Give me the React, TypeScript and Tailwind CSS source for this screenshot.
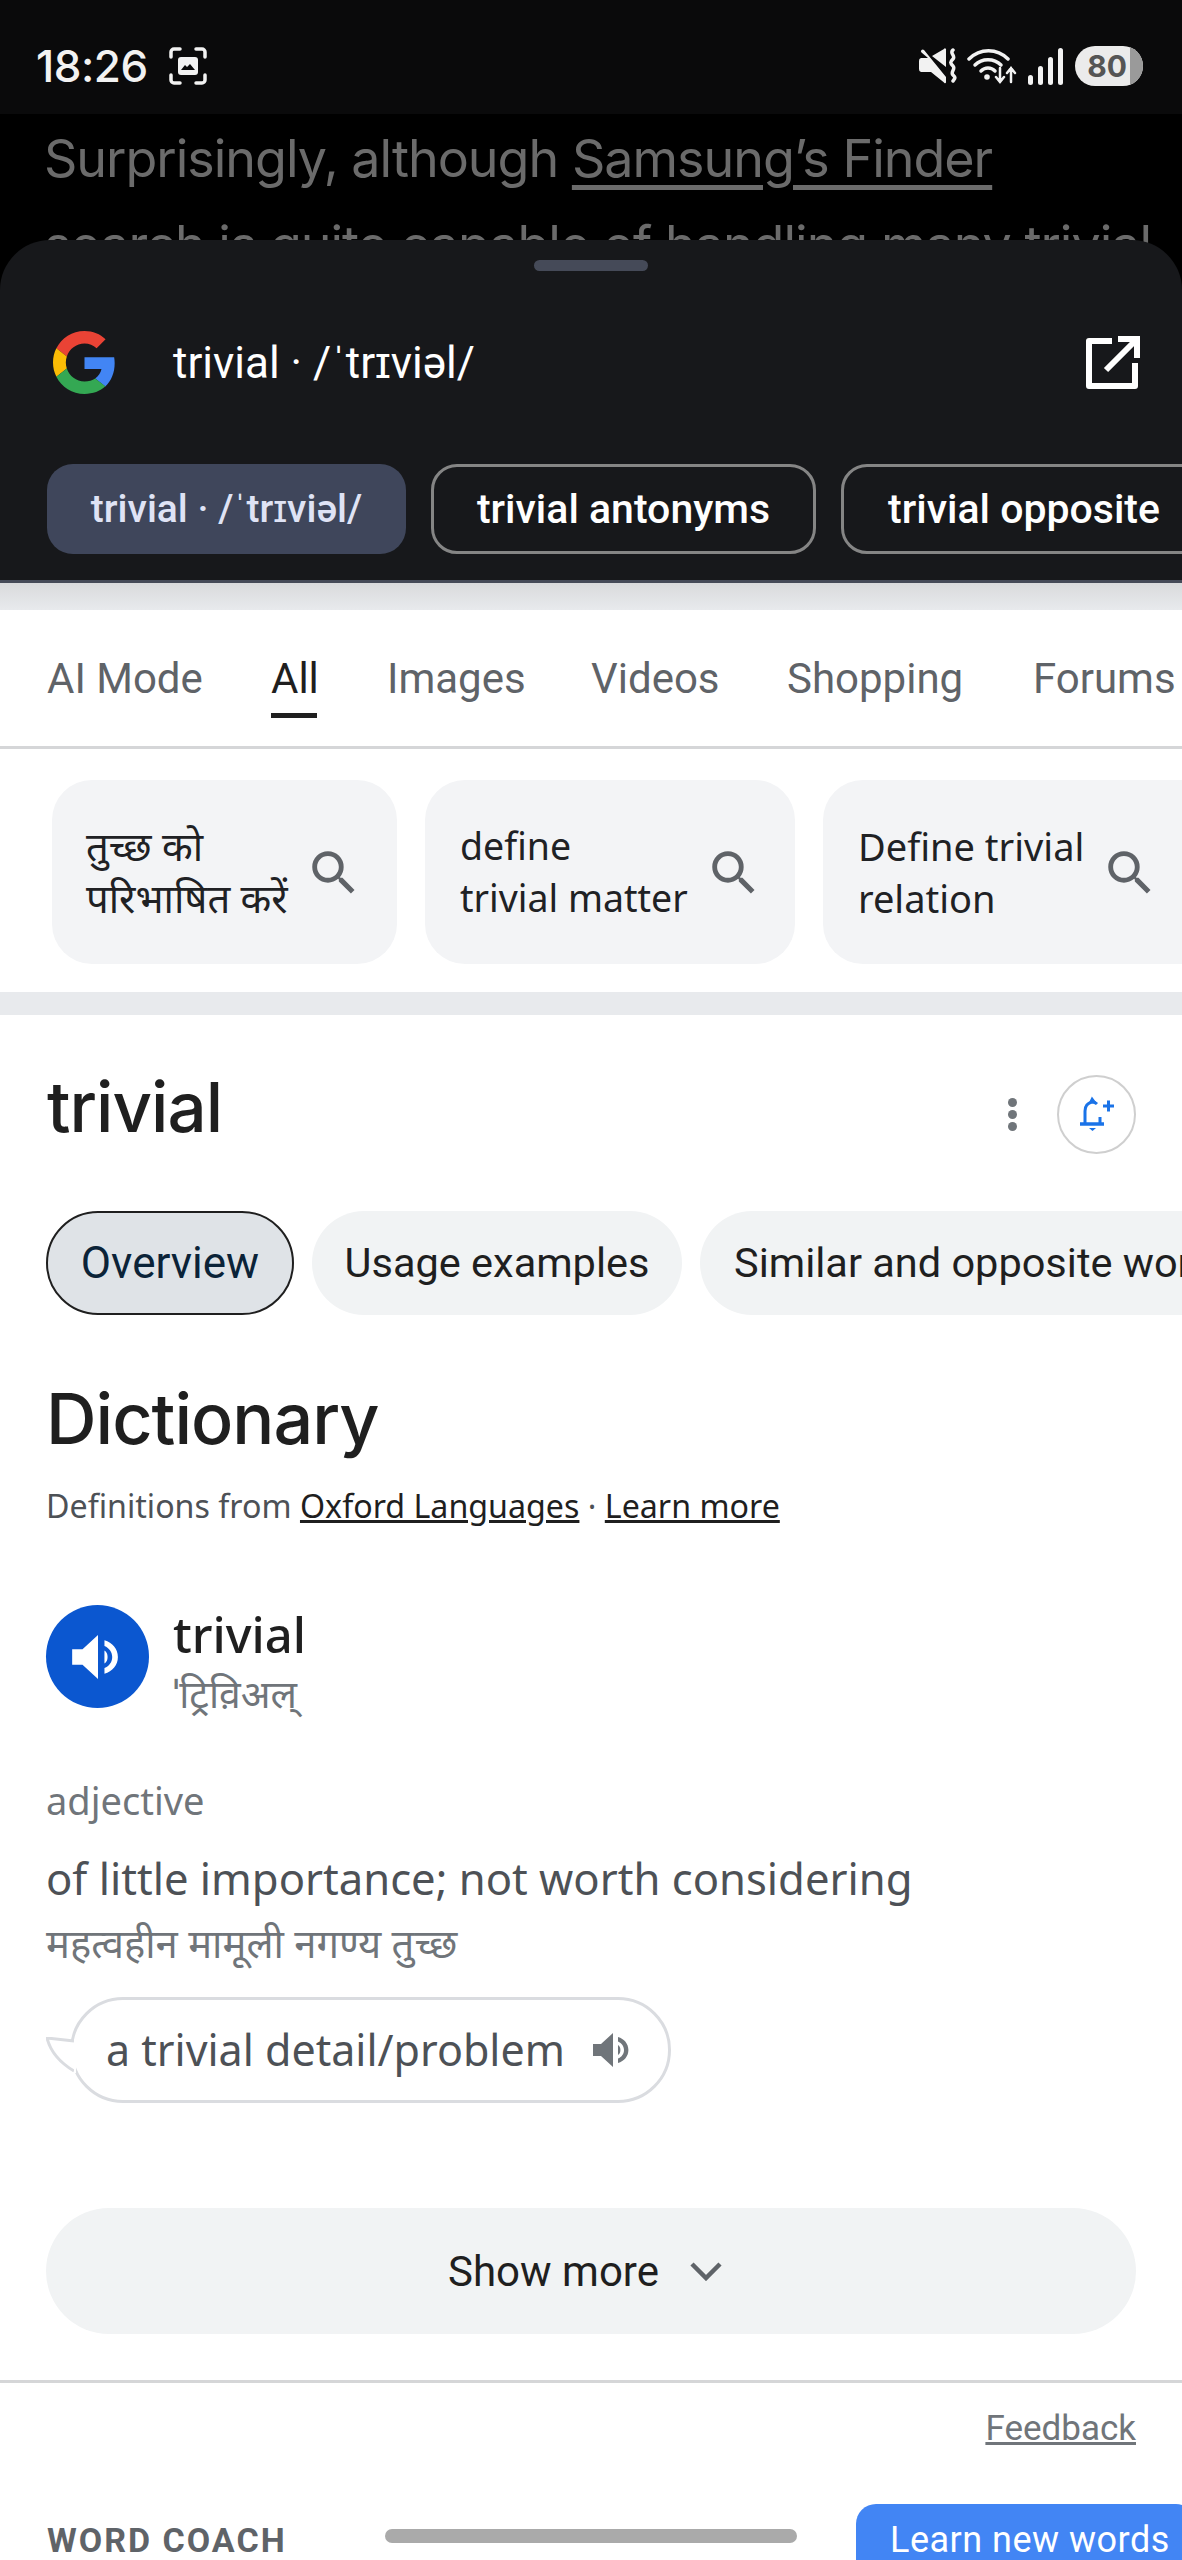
const chips = [
  { label: "trivial · /ˈtrɪviəl/", cls: "w-[359px] bg-[#3f465b] text-[39px] text-[#dfe3f5]" },
  { label: "trivial antonyms", cls: "w-[385px] border-[3px] border-[#858585] text-[41px] text-white" },
  { label: "trivial opposite", cls: "w-[400px] border-[3px] border-[#858585] pr-[34px] text-[41px] text-white" },
]

const tabs = [
  { name: "AI Mode", cls: "w-[154px]" },
  { name: "All", cls: "w-[46px]", active: true },
  { name: "Images", cls: "w-[134px]" },
  { name: "Videos", cls: "w-[126px]" },
  { name: "Shopping", cls: "w-[176px]" },
  { name: "Forums", cls: "w-[140px]" },
]

const suggestions = [
  { lines: ["तुच्छ को", "परिभाषित करें"], cls: "w-[345px] pl-[34px] text-[40px]" },
  { lines: ["define", "trivial matter"], cls: "w-[370px] pl-[35px] text-[37.5px]" },
  { lines: ["Define trivial", "relation"], cls: "w-[400px] pl-[35px] text-[38px]" },
]

function Speaker({ className }: { className: string }) {
  return (
    <svg viewBox="0 0 24 24" fill="currentColor" className={className}>
      <path d="M2 9v6h4l6 5.500v-17L6 9H2z" />
      <path d="M14.500 5.500v2.200c1.900.8 3 2.400 3 4.300s-1.100 3.500-3 4.300v2.200c3.100-.9 5.200-3.400 5.200-6.500s-2.100-5.600-5.200-6.500z" />
      <path d="M14.500 9.500v5c.9-.5 1.200-1.500 1.200-2.500s-.3-2-1.200-2.500z" />
    </svg>
  )
}

function SearchIcon({ className }: { className: string }) {
  return (
    <svg viewBox="0 0 24 24" fill="#5f6368" className={className}>
      <path d="M15.500 14h-.79l-.28-.27A6.471 6.471 0 0 0 16 9.500 6.500 6.500 0 1 0 9.500 16c1.610 0 3.090-.59 4.230-1.570l.27.28v.79l5 4.990L20.490 19l-4.990-5zm-6 0C7.010 14 5 11.990 5 9.500S7.010 5 9.500 5 14 7.010 14 9.500 11.990 14 9.500 14z" />
    </svg>
  )
}

function StatusBar() {
  return (
    <div className="flex h-[114px] items-center justify-between bg-[#0a0a0b] pl-[36px] pr-[39px] pt-[18px] text-[#f2f2f2]">
      <div className="flex items-center gap-[20px]">
        <span className="font-['Inter',sans-serif] text-[44px] font-medium leading-none tracking-[-0.5px]">18:26</span>
        {/* screenshot indicator */}
        <svg viewBox="0 0 40 40" className="h-[40px] w-[40px]" fill="none">
          <path d="M3 11V6a3 3 0 0 1 3-3h6M28 3h6a3 3 0 0 1 3 3v5M37 29v5a3 3 0 0 1-3 3h-6M12 37H6a3 3 0 0 1-3-3v-5" stroke="#f2f2f2" strokeWidth="3.500" strokeLinecap="round" />
          <rect x="10" y="11" width="20" height="18" rx="3" fill="#f2f2f2" />
          <path d="M13 24l4-5 2 2 3-3 5 6z" fill="#0a0a0b" />
        </svg>
      </div>
      <div className="flex items-center">
        {/* mute */}
        <svg viewBox="0 0 40 36" className="mr-[9px] h-[36px] w-[40px]" fill="#f2f2f2">
          <path d="M6 2l22 27v5a1 1 0 0 1-2 .5L13 24H3a3 3 0 0 1-2-3v-8a3 3 0 0 1 2-3h7L3.500 4.500A1.500 1.500 0 0 1 6 2z" />
          <path d="M14 8l12-7a1 1 0 0 1 2 1v17z" />
          <path d="M35 2c-4 3 3 6 0 9s-3 4 0 7-3 6 0 9 2 3 0 6" fill="none" stroke="#f2f2f2" strokeWidth="3.500" strokeLinecap="round" />
        </svg>
        {/* wifi with arrows */}
        <svg viewBox="0 0 50 36" className="mr-[11px] h-[36px] w-[50px]" fill="none" stroke="#f2f2f2" strokeLinecap="round">
          <path d="M2 11c11-11 28-11 39 0" strokeWidth="3.500" />
          <path d="M8 17c7-7 19-7 26 0" strokeWidth="3.500" />
          <path d="M14 23c4-4 10-4 14 0" strokeWidth="3.500" />
          <circle cx="20" cy="29" r="2.800" fill="#f2f2f2" stroke="none" />
          <path d="M33 20v14M29 29l4 5 4-5M44 34V20M40 25l4-5 4 5" strokeWidth="2.500" />
        </svg>
        {/* signal */}
        <div className="mr-[12px] flex h-[38px] w-[35px] items-end justify-between">
          <div className="h-[10px] w-[5px] rounded-full bg-[#f2f2f2]" />
          <div className="h-[19px] w-[5px] rounded-full bg-[#f2f2f2]" />
          <div className="h-[28px] w-[5px] rounded-full bg-[#f2f2f2]" />
          <div className="h-[37px] w-[5px] rounded-full bg-[#f2f2f2]" />
        </div>
        {/* battery */}
        <div className="flex h-[40px] w-[68px] overflow-hidden rounded-full bg-[#ebebeb]">
          <div className="flex w-[52px] items-center justify-end font-['Inter',sans-serif] text-[30px] font-bold leading-none text-[#555]">80</div>
          <div className="ml-auto w-[13px] bg-[#9a9a9a]" />
        </div>
      </div>
    </div>
  )
}

function Sheet() {
  return (
    <div className="relative -mt-[54px] h-[343px] rounded-t-[50px] border-b-[3px] border-[#454a58] bg-[#17181b] font-['Roboto',sans-serif]">
      <div className="flex justify-center pt-[20px]">
        <div className="h-[11px] w-[114px] rounded-full bg-[#454a58]" />
      </div>
      <div className="mt-[60px] flex items-center pl-[53px] pr-[42px]">
        <svg viewBox="0 0 48 48" className="h-[63px] w-[63px]">
          <path fill="#EA4335" d="M24 9.500c3.540 0 6.710 1.220 9.210 3.600l6.850-6.850C35.900 2.380 30.470 0 24 0 14.620 0 6.510 5.380 2.560 13.220l7.980 6.190C12.430 13.720 17.740 9.500 24 9.500z" />
          <path fill="#4285F4" d="M46.980 24.550c0-1.570-.15-3.090-.38-4.550H24v9.020h12.940c-.58 2.960-2.260 5.480-4.780 7.180l7.730 6c4.510-4.180 7.090-10.360 7.090-17.650z" />
          <path fill="#FBBC05" d="M10.530 28.590c-.48-1.450-.76-2.990-.76-4.590s.27-3.140.76-4.590l-7.980-6.190C.92 16.460 0 20.120 0 24c0 3.880.92 7.540 2.560 10.780l7.970-6.190z" />
          <path fill="#34A853" d="M24 48c6.480 0 11.930-2.130 15.890-5.810l-7.730-6c-2.150 1.450-4.920 2.300-8.160 2.300-6.260 0-11.570-4.220-13.470-9.910l-7.980 6.190C6.510 42.620 14.620 48 24 48z" />
        </svg>
        <span className="ml-[57px] text-[44px] leading-none text-white">trivial · /ˈtrɪviəl/</span>
        <svg viewBox="0 0 56 56" className="ml-auto h-[56px] w-[56px]" fill="none" stroke="#fff" strokeWidth="6">
          <path d="M28 6H5v45h46V28" strokeLinejoin="round" />
          <path d="M22 35L51 6M34 4h19v19" strokeLinejoin="miter" />
        </svg>
      </div>
      <div className="mt-[70px] flex gap-[25px] overflow-hidden pl-[47px]">
        {chips.map((chip) => (
          <div key={chip.label} className={`flex h-[90px] shrink-0 items-center justify-center rounded-[26px] font-medium leading-none ${chip.cls}`}>
            {chip.label}
          </div>
        ))}
      </div>
    </div>
  )
}

function Tabs() {
  return (
    <div className="flex h-[139px] gap-[70px] overflow-hidden border-b-[3px] border-[#d5d6d8] pl-[47px] font-['Roboto',sans-serif] text-[42px]">
      {tabs.map((tab) => (
        <div key={tab.name} className={`relative shrink-0 whitespace-nowrap pt-[46px] leading-[46px] ${tab.cls} ${tab.active ? "text-[#1f1f1f]" : "text-[#5f6368]"}`}>
          {tab.name}
          {tab.active && <div className="absolute bottom-[28px] left-0 h-[5px] w-full bg-[#1f1f1f]" />}
        </div>
      ))}
    </div>
  )
}

function Suggestions() {
  return (
    <div className="flex gap-[28px] overflow-hidden pl-[52px] pt-[31px] pb-[28px] font-['Roboto','Noto Sans',sans-serif] leading-[52px] text-[#202124]">
      {suggestions.map((s) => (
        <div key={s.lines[1]} className={`flex h-[184px] shrink-0 items-center rounded-[40px] bg-[#f3f4f6] ${s.cls}`}>
          <div className="whitespace-nowrap">
            {s.lines.map((line) => <div key={line}>{line}</div>)}
          </div>
          <SearchIcon className="ml-[17px] mt-[2px] h-[58px] w-[58px]" />
        </div>
      ))}
    </div>
  )
}

function WordHeader() {
  return (
    <div className="flex items-center justify-between pl-[47px] pr-[46px] pt-[52px]">
      <h1 className="mb-[14px] font-['Inter',sans-serif] text-[69px] font-medium leading-[80px] tracking-[-1px] text-[#1f1f1f]">trivial</h1>
      <div className="flex items-center gap-[40px]">
        <div className="flex flex-col gap-[3px]">
          <div className="h-[9px] w-[9px] rounded-full bg-[#70757a]" />
          <div className="h-[9px] w-[9px] rounded-full bg-[#70757a]" />
          <div className="h-[9px] w-[9px] rounded-full bg-[#70757a]" />
        </div>
        <div className="flex h-[79px] w-[79px] items-center justify-center rounded-full border-[2px] border-[#cfcfcf]">
          <svg viewBox="0 0 36 36" className="h-[36px] w-[36px]" fill="none" stroke="#1a73e8" strokeWidth="3">
            <path d="M1 28h24" strokeWidth="3.500" />
            <path d="M6 28V15c0-5 3-8 7-9 2 0 4 1 5 2M21 21v7" />
            <path d="M13 2l-2 4h5z" fill="#1a73e8" strokeWidth="1.500" />
            <path d="M24 10h11M29.500 4.500v11" />
            <path d="M10 32h7l-3.500 3z" fill="#1a73e8" stroke="none" />
          </svg>
        </div>
      </div>
    </div>
  )
}

function SectionChips() {
  return (
    <div className="mt-[50px] flex gap-[18px] overflow-hidden pl-[46px] font-['Roboto',sans-serif] leading-none">
      <div className="flex h-[104px] w-[248px] shrink-0 items-center justify-center rounded-full border-[2px] border-[#1f1f1f] bg-[#dfe3e7] text-[44px] text-[#0b2338]">Overview</div>
      <div className="flex h-[104px] w-[370px] shrink-0 items-center justify-center rounded-full bg-[#f1f3f4] text-[41.5px] text-[#1f1f1f]">Usage examples</div>
      <div className="flex h-[104px] shrink-0 items-center whitespace-nowrap rounded-full bg-[#f1f3f4] px-[34px] text-[41.5px] text-[#1f1f1f]">Similar and opposite words</div>
    </div>
  )
}

function Dictionary() {
  return (
    <div className="px-[46px] font-['Roboto','Noto Sans',sans-serif]">
      <h2 className="mt-[64px] font-['Inter',sans-serif] text-[70px] font-medium leading-[80px] tracking-[-1px] text-[#1f1f1f]">Dictionary</h2>
      <p className="mt-[27px] text-[32.2px] leading-[40px] text-[#4d5156]">
        Definitions from <span className="text-[#1f1f1f] underline">Oxford Languages</span> · <span className="text-[#1f1f1f] underline">Learn more</span>
      </p>
      <div className="mt-[79px] flex gap-[24px]">
        <div className="flex h-[103px] w-[103px] items-center justify-center rounded-full bg-[#0b57d0] text-white">
          <Speaker className="h-[62px] w-[62px]" />
        </div>
        <div>
          <div className="mt-[1px] text-[49px] font-medium leading-[56px] text-[#1f1f1f]">trivial</div>
          <div className="mt-[6px] text-[39px] leading-[50px] text-[#70757a]">ˈट्रिव़िअल्</div>
        </div>
      </div>
      <div className="mt-[60px] text-[38px] leading-[44px] text-[#70757a]">adjective</div>
      <div className="mt-[28px] text-[43.6px] leading-[56px] text-[#4d5156]">of little importance; not worth considering</div>
      <div className="mt-[12px] text-[40px] leading-[50px] text-[#70757a]">महत्वहीन मामूली नगण्य तुच्छ</div>
      <div className="relative ml-[24px] mt-[29px] flex h-[106px] w-[601px] items-center rounded-[53px] border-[3px] border-[#dadce0] pl-[33px] text-[43px] text-[#4d5156]">
        {/* bubble tail */}
        <svg viewBox="0 0 30 36" className="absolute -left-[27px] top-[37px] h-[36px] w-[30px]" fill="#fff">
          <path d="M28 4L1 1c3 12 12 24 27 33" stroke="#dadce0" strokeWidth="3" />
          <path d="M28 2h4v34h-4z" stroke="none" />
        </svg>
        <span className="relative">a trivial detail/problem</span>
        <Speaker className="ml-[24px] h-[48px] w-[48px] text-[#70757a]" />
      </div>
    </div>
  )
}

function Footer() {
  return (
    <div className="font-['Roboto',sans-serif]">
      <div className="mx-[46px] mt-[105px] flex h-[126px] items-center justify-center gap-[31px] rounded-full bg-[#f1f3f4] pr-[12px] text-[42px] text-[#1f1f1f]">
        <span>Show more</span>
        <svg viewBox="0 0 32 20" className="h-[20px] w-[32px]" fill="none" stroke="#5f6368" strokeWidth="4.500">
          <path d="M2 3l14 14L30 3" />
        </svg>
      </div>
      <div className="mt-[46px] h-[3px] bg-[#d5d6d8]" />
      <div className="mt-[24px] pr-[46px] text-right text-[35px] leading-[44px] text-[#70757a]">
        <span className="underline">Feedback</span>
      </div>
      <div className="mt-[53px] flex items-start overflow-hidden pl-[47px]">
        <span className="mt-[16px] w-[338px] shrink-0 whitespace-nowrap text-[34px] font-bold leading-[40px] tracking-[2px] text-[#5f6368]">WORD COACH</span>
        <div className="mt-[25px] h-[14px] w-[412px] shrink-0 rounded-full bg-[#aaaaaa]" />
        <div className="ml-[59px] h-[80px] w-[340px] shrink-0 rounded-t-[20px] bg-[#4285f4] pl-[34px] pt-[16px] text-[36px] leading-[40px] tracking-[0.5px] text-white">Learn new words</div>
      </div>
    </div>
  )
}

export default function App() {
  return (
    <div className="h-[2560px] w-[1182px] overflow-hidden bg-white">
      <StatusBar />
      {/* article behind the sheet */}
      <div className="h-[180px] overflow-hidden bg-black pl-[44px] pt-[2px] font-['Inter',sans-serif] text-[52px] leading-[86px] tracking-[-1px] text-[#6b6b6b]">
        <div className="whitespace-nowrap">Surprisingly, although <span className="underline underline-offset-[8px]">Samsung’s Finder</span></div>
        <div className="whitespace-nowrap">search is quite capable of handling many trivial</div>
      </div>
      <Sheet />
      <div className="h-[27px] bg-gradient-to-b from-[#d9dadc] to-[#e8eaed]" />
      <Tabs />
      <Suggestions />
      <div className="h-[23px] bg-[#e8eaed]" />
      <WordHeader />
      <SectionChips />
      <Dictionary />
      <Footer />
    </div>
  )
}
